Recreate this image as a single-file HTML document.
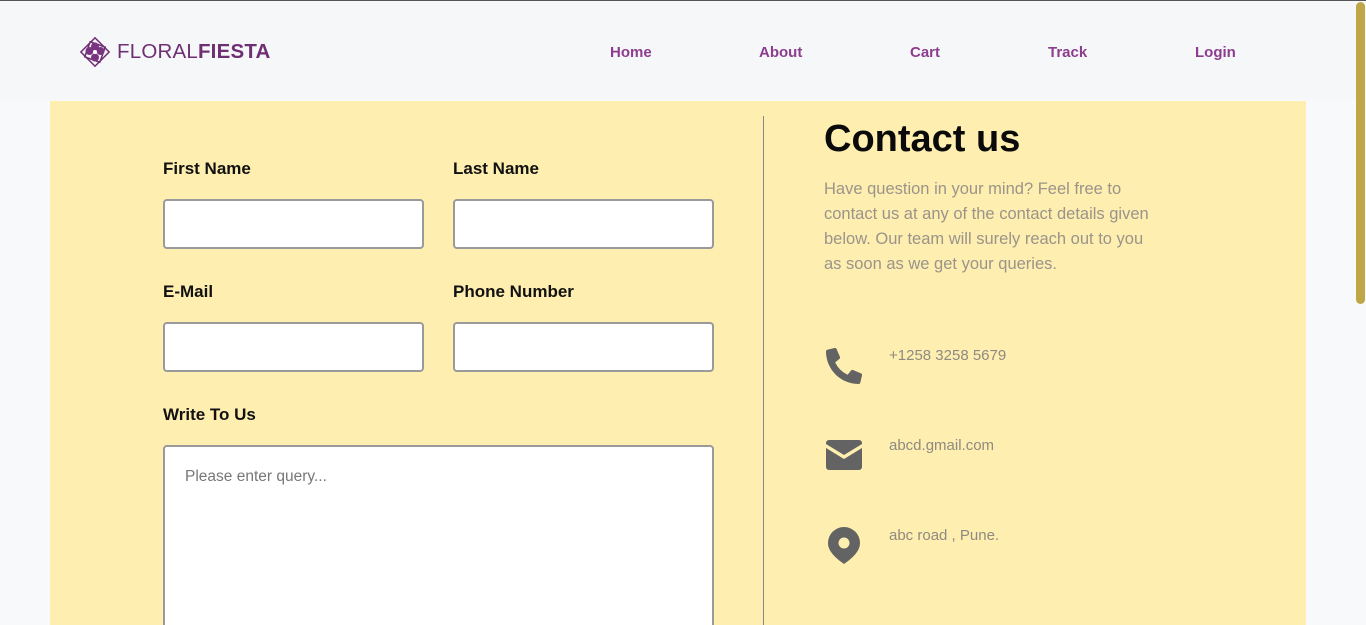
<!DOCTYPE html>
<html><head><meta charset="utf-8"><style>
*{margin:0;padding:0;box-sizing:border-box}
html{width:1366px;height:625px;overflow:hidden}
body{width:1366px;height:625px;overflow:hidden;background:#f8f9fa;font-family:"Trebuchet MS","Liberation Sans","DejaVu Sans",sans-serif;position:relative}
.topline{position:absolute;left:0;top:0;width:1366px;height:1px;background:#555}
.hdr{position:absolute;left:0;top:1px;width:1356px;height:99px;background:#f6f7f9}
.logo{position:absolute;left:79px;top:35px;display:flex;align-items:center;color:#6f2f73;font-size:20.5px;letter-spacing:0.2px}
.logo svg{margin-right:6px}
.nav a{position:absolute;top:44px;color:#8d3c8e;font-weight:bold;font-size:15px;text-decoration:none}
.main{position:absolute;left:50px;top:101px;width:1256px;height:524px;background:#feeeb0}
.div{position:absolute;left:763px;top:116px;width:1px;height:509px;background:#888}
label{position:absolute;font-weight:bold;font-size:17px;color:#111}
.in{position:absolute;background:#fff;border:2px solid #9a9a9a;border-radius:4px}
h1{position:absolute;left:824px;top:118px;font-size:38px;font-weight:bold;color:#0a0a0a}
.desc{position:absolute;left:824px;top:177px;width:420px;font-size:16.5px;line-height:25px;color:#9a948a;white-space:nowrap}
.ci{position:absolute;left:889px;font-size:15px;color:#8f8a80}
.sb{position:absolute;left:1356px;top:1px;width:10px;height:624px;background:#f8f9fa}
.th{position:absolute;left:1356px;top:2px;width:9px;height:302px;background:#bfa647;border-radius:5px}
</style></head><body>
<div class="topline"></div>
<div class="hdr"></div>
<div class="logo"><svg width="32" height="34" viewBox="0 0 32 34"><g fill="none" stroke="#6f2f73" stroke-width="1.5"><rect x="6" y="7" width="20" height="20" transform="rotate(45 16 17)"/><rect x="8" y="9" width="16" height="16" transform="rotate(20 16 17)"/></g><g fill="#7a3580"><circle cx="16" cy="11.5" r="4"/><circle cx="21.5" cy="16" r="4"/><circle cx="16" cy="22.5" r="4"/><circle cx="10.5" cy="16" r="4"/></g><circle cx="16" cy="17" r="2" fill="#fff"/></svg><span>FLORAL<b>FIESTA</b></span></div>
<div class="nav"><a style="left:610px">Home</a><a style="left:759px">About</a><a style="left:910px">Cart</a><a style="left:1048px">Track</a><a style="left:1195px">Login</a></div>
<div class="main"></div>
<div class="div"></div>
<label style="left:163px;top:159px">First Name</label>
<label style="left:453px;top:159px">Last Name</label>
<div class="in" style="left:163px;top:199px;width:261px;height:50px"></div>
<div class="in" style="left:453px;top:199px;width:261px;height:50px"></div>
<label style="left:163px;top:282px">E-Mail</label>
<label style="left:453px;top:282px">Phone Number</label>
<div class="in" style="left:163px;top:322px;width:261px;height:50px"></div>
<div class="in" style="left:453px;top:322px;width:261px;height:50px"></div>
<label style="left:163px;top:405px">Write To Us</label>
<div class="in" style="left:163px;top:445px;width:551px;height:200px"><span style="position:absolute;left:20px;top:21px;font-size:15.5px;color:#777">Please enter query...</span></div>
<h1>Contact us</h1>
<div class="desc">Have question in your mind? Feel free to<br>contact us at any of the contact details given<br>below. Our team will surely reach out to you<br>as soon as we get your queries.</div>
<svg style="position:absolute;left:826px;top:348px" width="36" height="36" viewBox="0 0 512 512"><path fill="#636363" d="M497 361l-112-48a24 24 0 0 0-28 7l-50 61A371 371 0 0 1 130 204l61-50a24 24 0 0 0 7-28L150 14a24 24 0 0 0-28-14L18 24A24 24 0 0 0 0 48c0 256 208 464 464 464a24 24 0 0 0 24-19l24-104a24 24 0 0 0-15-28z"/></svg>
<div class="ci" style="top:347px">+1258 3258 5679</div>
<svg style="position:absolute;left:826px;top:440px" width="36" height="30" viewBox="0 0 36 30"><path fill="#636363" d="M3 0h30a3 3 0 0 1 3 3v1L18 15 0 4V3a3 3 0 0 1 3-3zM0 8l18 11 18-11v19a3 3 0 0 1-3 3H3a3 3 0 0 1-3-3z"/></svg>
<div class="ci" style="top:437px">abcd.gmail.com</div>
<svg style="position:absolute;left:828px;top:527px" width="32" height="37" viewBox="0 0 32 37"><path fill="#636363" d="M16 0a16 16 0 0 1 16 16c0 9-9 16-16 21C9 32 0 25 0 16A16 16 0 0 1 16 0z"/><circle cx="16" cy="16" r="5.5" fill="#feeeb0"/></svg>
<div class="ci" style="top:527px">abc road , Pune.</div>
<div class="sb"></div><div class="th"></div>
</body></html>
